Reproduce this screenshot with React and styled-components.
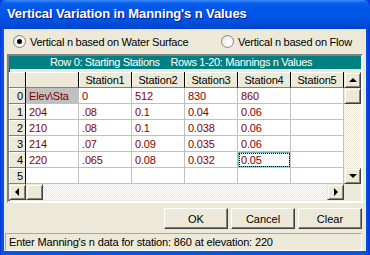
import React from "react";
import styled, { createGlobalStyle } from "styled-components";

const GlobalStyle = createGlobalStyle`
  html, body { margin: 0; padding: 0; background: #fff; }
  * { box-sizing: border-box; }
`;

const FONT = `"Liberation Sans", Arial, sans-serif`;

const columns = ["", "Station1", "Station2", "Station3", "Station4", "Station5"];

const rows = [
  ["Elev\\Sta", "0", "512", "830", "860", ""],
  ["204", ".08", "0.1", "0.04", "0.06", ""],
  ["210", ".08", "0.1", "0.038", "0.06", ""],
  ["214", ".07", "0.09", "0.035", "0.06", ""],
  ["220", ".065", "0.08", "0.032", "0.05", ""],
  ["", "", "", "", "", ""],
];

const selected = { row: 4, col: 4 };

const Window = styled.div`
  width: 370px;
  height: 255px;
  display: flex;
  flex-direction: column;
  background: linear-gradient(90deg, #0831d9 0, #0055e5 2px, #0055e5 366px, #0831d9 370px);
  font-family: ${FONT};
  font-size: 11px;
  letter-spacing: -0.15px;
  color: #000;
`;

const TitleBar = styled.div`
  height: 29px;
  flex: none;
  display: flex;
  align-items: center;
  padding: 0 7px 2px;
  background: linear-gradient(#3d8cff 0, #0a5eeb 3px, #0058e6 8px, #0055e5 18px, #004ad8 25px, #0042c8 29px);
  border-radius: 7px 7px 0 0;
  color: #fff;
  font-weight: bold;
  font-size: 13px;
  text-shadow: 1px 1px #0a1883;
  letter-spacing: -0.1px;
`;

const Body = styled.div`
  flex: 1;
  margin: 0 4px 4px 4px;
  background: #ece9d8;
  display: flex;
  flex-direction: column;
`;

const RadioRow = styled.div`
  height: 25px;
  display: flex;
  align-items: center;
  padding: 0 0 0 9px;
`;

const RadioOption = styled.label`
  display: flex;
  align-items: center;
  gap: 4px;
  width: ${(p) => p.$width}px;
  white-space: nowrap;
  letter-spacing: -0.25px;
`;

const RadioCircle = styled.span`
  width: 13px;
  height: 13px;
  flex: none;
  border-radius: 50%;
  border: 1px solid #8a8a85;
  background: radial-gradient(circle at 65% 65%, #ffffff 0, #f4f3ee 50%, #d6d3c6 100%);
  display: flex;
  align-items: center;
  justify-content: center;
  &::after {
    content: "";
    width: 5px;
    height: 5px;
    border-radius: 50%;
    background: ${(p) => (p.$checked ? "#000" : "transparent")};
  }
`;

const GridFrame = styled.div`
  margin: 0 3px;
  height: 149px;
  border: 2px solid;
  border-color: #808080 #ffffff #ffffff #808080;
  box-shadow: inset 1px 1px #404040;
  display: flex;
  flex-direction: column;
  background: #ece9d8;
`;

const Caption = styled.div`
  height: 13px;
  margin-bottom: 3px;
  background: #008080;
  color: #fff;
  line-height: 13px;
  padding-left: 41px;
  white-space: pre;
  letter-spacing: -0.35px;
`;

const GridBody = styled.div`
  display: flex;
  height: 112px;
`;

const Table = styled.div`
  width: 335px;
  display: grid;
  grid-template-columns: 17px repeat(6, 53px);
  grid-auto-rows: 16px;
  background: #fff;
`;

const HeaderCell = styled.div`
  background: #ece9d8;
  border-right: 1px solid #000;
  border-bottom: 1px solid #808080;
  box-shadow: inset 1px 1px #fff;
  display: flex;
  align-items: center;
  justify-content: ${(p) => (p.$num ? "flex-end" : "center")};
  padding-right: ${(p) => (p.$num ? "2px" : "0")};
`;

const Cell = styled.div`
  border-right: 1px solid #c0c0c0;
  border-bottom: 1px solid #c0c0c0;
  background: ${(p) => (p.$grey ? "#c0c0c0" : "#fff")};
  color: #800000;
  display: flex;
  align-items: center;
  padding-left: 3px;
  white-space: nowrap;
  overflow: hidden;
  ${(p) =>
    p.$focus &&
    `
    outline: 1px dotted #000;
    outline-offset: -2px;
    box-shadow: inset 0 0 0 1px #6fb3b3;
  `}
`;

const VScroll = styled.div`
  width: 17px;
  display: flex;
  flex-direction: column;
`;

const Track = styled.div`
  flex: 1;
  background: repeating-conic-gradient(#ffffff 0 25%, #ece9d8 0 50%) 0 0 / 2px 2px;
`;

const ScrollButton = styled.div`
  width: 17px;
  height: 16px;
  flex: none;
  background: #ece9d8;
  border: 1px solid;
  border-color: #ece9d8 #404040 #404040 #ece9d8;
  box-shadow: inset 1px 1px #fff, inset -1px -1px #808080;
  display: flex;
  align-items: center;
  justify-content: center;
`;

const Arrow = styled.span`
  width: 0;
  height: 0;
  border: 4px solid transparent;
  ${(p) => p.$dir === "up" && "border-bottom-color: #000; border-top-width: 0;"}
  ${(p) => p.$dir === "down" && "border-top-color: #000; border-bottom-width: 0;"}
  ${(p) => p.$dir === "left" && "border-right-color: #000; border-left-width: 0; margin-right: 2px;"}
  ${(p) => p.$dir === "right" && "border-left-color: #000; border-right-width: 0; margin-left: 1px;"}
`;

const HScroll = styled.div`
  display: flex;
  height: 16px;
`;

const Corner = styled.div`
  width: 17px;
  background: #ece9d8;
`;

const ButtonRow = styled.div`
  display: flex;
  justify-content: flex-end;
  gap: 3px;
  margin: 5px 4px 0 0;
`;

const Button = styled.button`
  width: 64px;
  height: 21px;
  padding: 0;
  font-family: ${FONT};
  font-size: 11px;
  color: #000;
  background: #ece9d8;
  border: 1px solid;
  border-color: #fff #404040 #404040 #fff;
  box-shadow: inset -1px -1px #808080;
`;

const StatusBar = styled.div`
  margin: 4px 4px 0 1px;
  height: 18px;
  border: 1px solid;
  border-color: #aca899 #fff #fff #aca899;
  display: flex;
  align-items: center;
  padding-left: 3px;
`;

export default function App() {
  return (
    <>
      <GlobalStyle />
      <Window>
        <TitleBar>Vertical Variation in Manning's n Values</TitleBar>
        <Body>
          <RadioRow>
            <RadioOption $width={208}>
              <RadioCircle $checked />
              Vertical n based on Water Surface
            </RadioOption>
            <RadioOption $width={140}>
              <RadioCircle />
              Vertical n based on Flow
            </RadioOption>
          </RadioRow>
          <GridFrame>
            <Caption>{"Row 0: Starting Stations    Rows 1-20: Mannings n Values"}</Caption>
            <GridBody>
              <Table>
                <HeaderCell />
                {columns.map((c, i) => (
                  <HeaderCell key={i}>{c}</HeaderCell>
                ))}
                {rows.map((r, ri) => (
                  <React.Fragment key={ri}>
                    <HeaderCell $num>{ri}</HeaderCell>
                    {r.map((v, ci) => (
                      <Cell
                        key={ci}
                        $grey={ri === 0 && ci === 0}
                        $focus={ri === selected.row && ci === selected.col}
                      >
                        {v}
                      </Cell>
                    ))}
                  </React.Fragment>
                ))}
              </Table>
              <VScroll>
                <ScrollButton>
                  <Arrow $dir="up" />
                </ScrollButton>
                <ScrollButton />
                <Track />
                <ScrollButton>
                  <Arrow $dir="down" />
                </ScrollButton>
              </VScroll>
            </GridBody>
            <HScroll>
              <ScrollButton>
                <Arrow $dir="left" />
              </ScrollButton>
              <ScrollButton />
              <Track />
              <ScrollButton>
                <Arrow $dir="right" />
              </ScrollButton>
              <Corner />
            </HScroll>
          </GridFrame>
          <ButtonRow>
            <Button>OK</Button>
            <Button>Cancel</Button>
            <Button>Clear</Button>
          </ButtonRow>
          <StatusBar>Enter Manning's n data for station: 860 at elevation: 220</StatusBar>
        </Body>
      </Window>
    </>
  );
}
